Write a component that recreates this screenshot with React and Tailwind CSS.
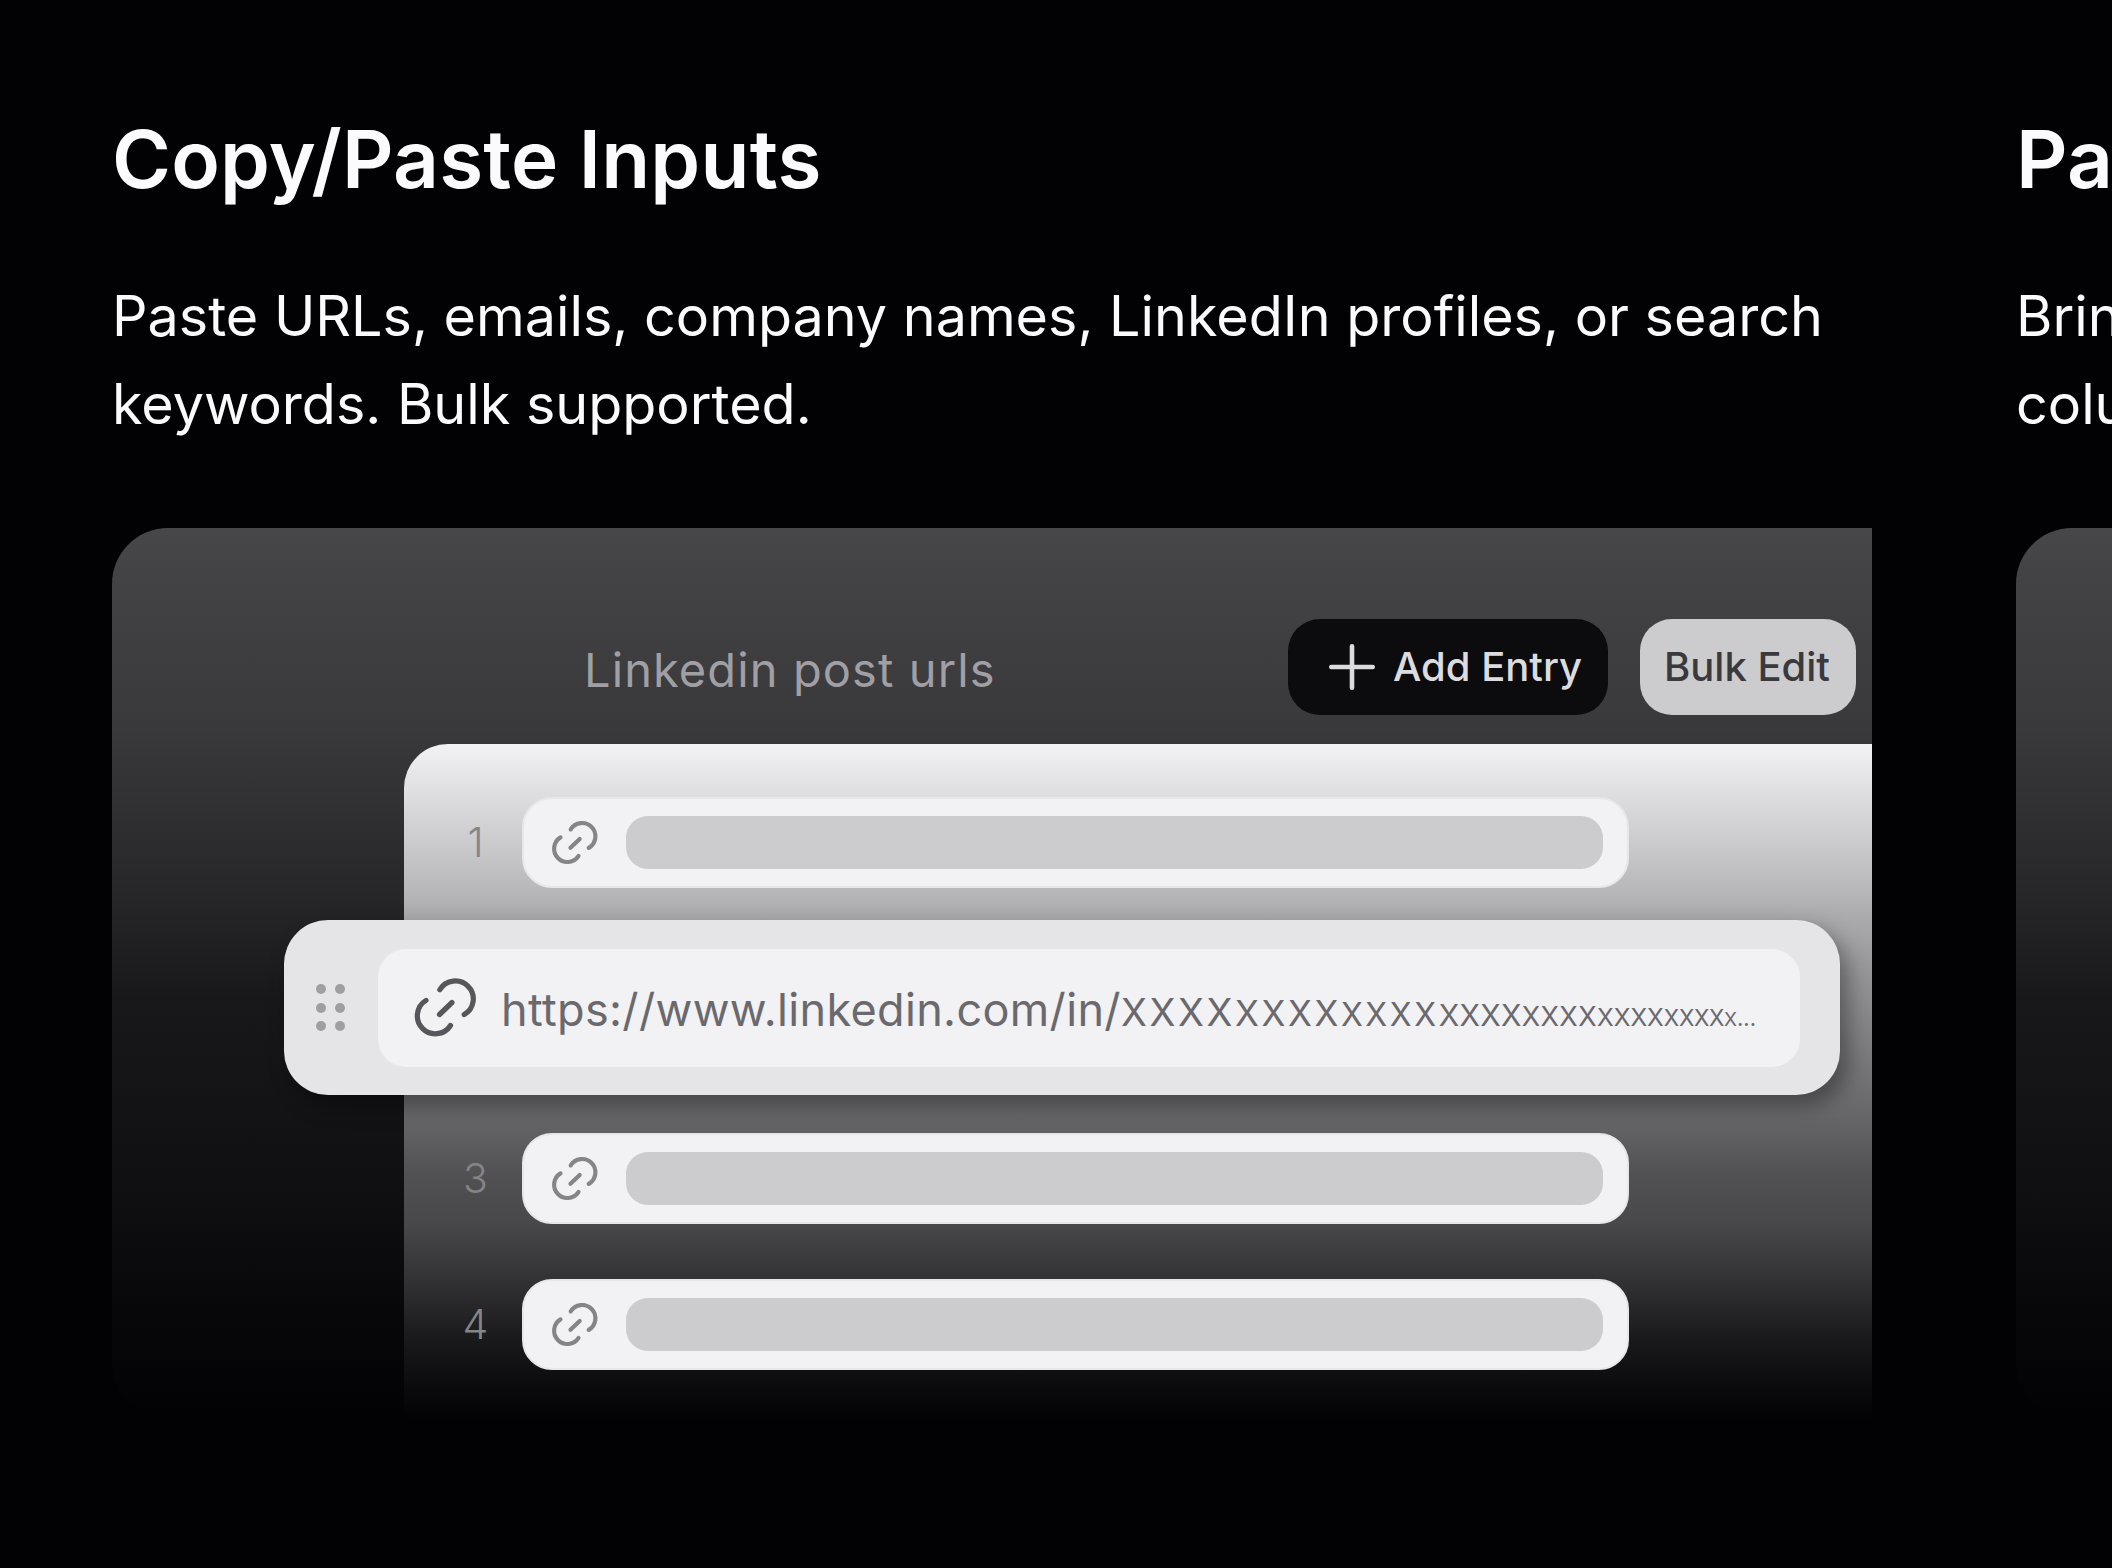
import React from "react";

function LinkIcon({ className, sw }) {
  return (
    <svg viewBox="0 0 84 84" fill="none" stroke="currentColor" strokeWidth={sw} strokeLinecap="round" className={className}>
      <path d="M34.8 23.8A18 18 0 1 1 59.2 48.6" />
      <path d="M21 34.4A18 18 0 1 0 45.5 59.5" />
      <path d="M34.5 48.5L47 36.5" />
    </svg>
  );
}

function Row({ n, className }) {
  return (
    <div className={"flex items-center " + className}>
      <div className="w-[118px] pl-[25px] flex justify-center font-['Inter',sans-serif] font-light text-[41px] leading-none text-[#858487]">{n}</div>
      <div className="w-[1107px] h-[91px] rounded-[30px] bg-[#f2f1f4] border-2 border-[#e7e6e9] flex items-center pl-[21px]">
        <LinkIcon sw="5.6" className="w-[62px] h-[62px] text-[#858487] shrink-0" />
        <div className="ml-[19px] w-[977px] h-[53px] rounded-[22px] bg-[#cccbce]" />
      </div>
    </div>
  );
}

const groups = [
  ["XXXX", "text-[38px] tracking-[2.6px]"],
  ["XXXX", "text-[35px] tracking-[2.6px]"],
  ["XXXX", "text-[32px] tracking-[2.6px]"],
  ["XXXX", "text-[30px] tracking-[0.3px]"],
  ["XXXX", "text-[27px] tracking-[0.4px]"],
  ["XXXX", "text-[24.5px] tracking-[0px]"],
  ["XXXX", "text-[22.5px] tracking-[-0.3px]"],
  ["X", "text-[19px] tracking-[-1px]"],
];

const cardBg =
  "bg-[linear-gradient(180deg,#474649_0%,#424144_7%,#39383b_22.6%,#262528_41.7%,#18171a_52.9%,#0f0e11_75.3%,#08070a_86.5%,#020103_100%)]";

export default function App() {
  return (
    <div className="w-[2112px] h-[1568px] bg-[#020103] overflow-hidden flex gap-[144px] pl-[112px] pt-[111px] font-['Inter',sans-serif] text-[#fbfafc]">
      <div className="w-[1760px] shrink-0 flex flex-col">
        <h2 className="text-[80px] leading-[96px] font-semibold tracking-[0.2px] whitespace-nowrap">Copy/Paste Inputs</h2>
        <p className="mt-[65px] text-[55.65px] leading-[88px] font-normal w-[1760px]">
          Paste URLs, emails, company names, LinkedIn profiles, or search keywords. Bulk supported.
        </p>
        <div className={"relative mt-[80px] h-[892px] rounded-l-[56px] overflow-hidden pt-[91px] flex flex-col " + cardBg}>
          <div className="flex items-center h-[96px] pr-[16px] shrink-0">
            <div className="flex-1 pl-[472px] pt-[4px] text-[47px] leading-none tracking-[1.1px] text-[#a09fa3]">Linkedin post urls</div>
            <div className="flex gap-[32px]">
              <div className="w-[320px] h-[96px] rounded-[32px] bg-[#0c0b0e] flex items-center pl-[41px] gap-[18px] text-[#dcdbde]">
                <svg viewBox="0 0 46 46" className="w-[46px] h-[46px]" fill="none" stroke="currentColor" strokeWidth="4.6" strokeLinecap="round">
                  <path d="M23 2.3V43.7M2.3 23H43.7" />
                </svg>
                <span className="text-[40px] leading-none font-medium">Add Entry</span>
              </div>
              <div className="w-[216px] h-[96px] rounded-[32px] bg-[#cccbce] flex items-center justify-center pr-[2px] text-[40px] leading-none font-medium text-[#3a393d]">Bulk Edit</div>
            </div>
          </div>
          <div className="mt-[29px] ml-[292px] flex-1 rounded-tl-[44px] pt-[53px] flex flex-col bg-[linear-gradient(180deg,#f2f1f4_0%,#dfdee1_7%,#b8b7ba_21.6%,#acabae_25%,#8d8c8f_38%,#69686b_54%,#515053_64%,#48474a_71%,#333235_79%,#1a191c_88%,#0d0c0f_94%,#020103_100%)]">
            <Row n="1" />
            <Row n="3" className="mt-[245px]" />
            <Row n="4" className="mt-[55px]" />
          </div>
          <div className="absolute left-[172px] top-[392px] w-[1556px] h-[175px] rounded-[44px] bg-[#e5e4e7] shadow-[8px_10px_22px_rgba(0,0,0,0.38)] flex items-center pr-[40px]">
            <div className="w-[94px] shrink-0 flex justify-center">
              <div className="grid grid-cols-2 gap-x-[9px] gap-y-[8.5px] mr-[2px]">
                {[0, 1, 2, 3, 4, 5].map((i) => (
                  <div key={i} className="w-[10px] h-[10px] rounded-full bg-[#9f9ea1]" />
                ))}
              </div>
            </div>
            <div className="flex-1 h-[118px] rounded-[28px] bg-[#f2f1f4] flex items-center pl-[27px] overflow-hidden">
              <LinkIcon sw="5.2" className="w-[84px] h-[84px] text-[#57565a] shrink-0" />
              <div className="ml-[12px] pt-[4px] whitespace-nowrap font-['Inter',sans-serif] font-normal text-[#6a696e] text-[45px] leading-none flex items-baseline">
                <span className="tracking-[0.35px]">https://www.linkedin.com/in/</span>
                {groups.map(([t, c], i) => (
                  <span key={i} className={c}>{t}</span>
                ))}
                <span className="text-[22px] ml-[1px]">...</span>
              </div>
            </div>
          </div>
        </div>
      </div>
      <div className="w-[1760px] shrink-0 flex flex-col">
        <h2 className="text-[80px] leading-[96px] font-semibold tracking-[0.2px] whitespace-nowrap">Paste</h2>
        <p className="mt-[65px] text-[55.65px] leading-[88px] font-normal whitespace-nowrap">
          Bring<br />columns
        </p>
        <div className={"mt-[80px] h-[892px] rounded-l-[56px] " + cardBg} />
      </div>
    </div>
  );
}
